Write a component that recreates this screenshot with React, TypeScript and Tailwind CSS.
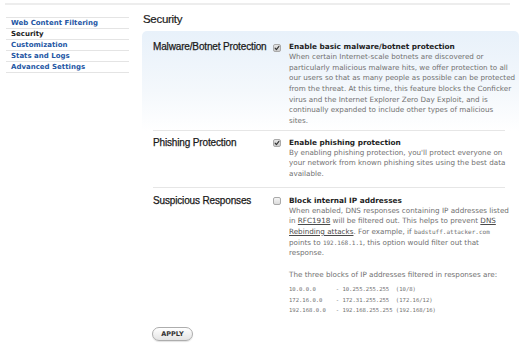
import React from "react";

const navItems = [
  { label: "Web Content Filtering", active: false },
  { label: "Security", active: true },
  { label: "Customization", active: false },
  { label: "Stats and Logs", active: false },
  { label: "Advanced Settings", active: false },
];

function Check({ checked }: { checked: boolean }) {
  return (
    <svg width="8" height="8" viewBox="0 0 8 8" className="block">
      <defs>
        <linearGradient id={checked ? "cbg1" : "cbg0"} x1="0" y1="0" x2="0" y2="1">
          <stop offset="0" stopColor={checked ? "#e8e8e8" : "#f6f6f6"} />
          <stop offset="1" stopColor={checked ? "#c8c8c8" : "#dadada"} />
        </linearGradient>
      </defs>
      <rect x="0.5" y="0.5" width="7" height="7" rx="1.5" fill={`url(#${checked ? "cbg1" : "cbg0"})`} stroke="#a9a9a9" strokeWidth="1" />
      {checked && <path d="M2.1 4.1 L3.4 5.6 L5.9 2.3" fill="none" stroke="#333" strokeWidth="1.1" strokeLinecap="round" strokeLinejoin="round" />}
    </svg>
  );
}

function Lines({ lines }: { lines: React.ReactNode[] }) {
  return (
    <div className="text-[7.2px] leading-[10.67px] text-[#707070]">
      {lines.map((l, i) => (
        <div key={i} className="whitespace-nowrap h-[10.67px]">
          {l}
        </div>
      ))}
    </div>
  );
}

function Section({
  label,
  checked,
  title,
  children,
  className,
}: {
  label: string;
  checked: boolean;
  title: string;
  children: React.ReactNode;
  className: string;
}) {
  return (
    <div className={`flex ${className}`}>
      <div className="w-[120px] shrink-0 font-['Liberation_Sans',Arial,sans-serif] text-[10px] leading-[10px] text-[#1a1a1a] tracking-[-0.15px] [-webkit-text-stroke:0.25px_#1a1a1a]">
        {label}
      </div>
      <div className="w-[16px] shrink-0 pt-[1.5px]">
        <Check checked={checked} />
      </div>
      <div className="flex-1 font-['DejaVu_Sans',Verdana,sans-serif]">
        <div className="text-[7.35px] leading-[10px] font-bold text-[#1e1e1e] whitespace-nowrap">{title}</div>
        {children}
      </div>
    </div>
  );
}

export default function App() {
  const mono = "font-['DejaVu_Sans_Mono','Liberation_Mono',monospace]";
  return (
    <div className="w-[522px] h-[346px] bg-white overflow-hidden">
      <div className="mt-[3px] ml-[5px] w-[505px] h-[2px] bg-[#ededed]" />
      <div className="flex">
        <nav className="ml-[6px] mt-[12px] w-[123px] self-start border-t border-[#e4e4e4] font-['DejaVu_Sans',Verdana,sans-serif] text-[7px] font-bold">
          {navItems.map((it) => (
            <div
              key={it.label}
              className={`h-[11px] border-b border-[#e4e4e4] pl-[5px] leading-[10px] whitespace-nowrap ${
                it.active ? "text-[#1a1a1a]" : "text-[#2456a4]"
              }`}
            >
              {it.label}
            </div>
          ))}
        </nav>
        <main className="ml-[13px] w-[377px]">
          <h1 className="mt-[7px] mb-[5px] pl-[1px] leading-[14px] text-[11.5px] font-['Liberation_Sans',Arial,sans-serif] text-[#222] tracking-[-0.3px] [-webkit-text-stroke:0.2px_#222]">
            Security
          </h1>
          <div className="rounded-t-[5px] bg-[linear-gradient(to_bottom,#e8f1fa_0px,#f4f8fc_60px,#ffffff_100px)] pl-[11px] pr-[14px]">
            <Section
              label="Malware/Botnet Protection"
              checked={true}
              title="Enable basic malware/botnet protection"
              className="pt-[11px] pb-[3px] border-b border-[#e6e6e6]"
            >
              <Lines
                lines={[
                  "When certain Internet-scale botnets are discovered or",
                  "particularly malicious malware hits, we offer protection to all",
                  "our users so that as many people as possible can be protected",
                  "from the threat. At this time, this feature blocks the Conficker",
                  "virus and the Internet Explorer Zero Day Exploit, and is",
                  "continually expanded to include other types of malicious",
                  "sites.",
                ]}
              />
            </Section>
            <Section
              label="Phishing Protection"
              checked={true}
              title="Enable phishing protection"
              className="pt-[7px] pb-[7px] border-b border-[#e6e6e6]"
            >
              <Lines
                lines={[
                  "By enabling phishing protection, you'll protect everyone on",
                  "your network from known phishing sites using the best data",
                  "available.",
                ]}
              />
            </Section>
            <Section
              label="Suspicious Responses"
              checked={false}
              title="Block internal IP addresses"
              className="pt-[8px]"
            >
              <Lines
                lines={[
                  "When enabled, DNS responses containing IP addresses listed",
                  <>
                    in <span className="underline text-[#4a4a4a]">RFC1918</span> will be filtered out. This helps to prevent{" "}
                    <span className="underline text-[#4a4a4a]">DNS</span>
                  </>,
                  <>
                    <span className="underline text-[#4a4a4a]">Rebinding attacks</span>. For example, if{" "}
                    <span className={`${mono} text-[6px]`}>badstuff.attacker.com</span>
                  </>,
                  <>
                    points to <span className={`${mono} text-[6px]`}>192.168.1.1</span>, this option would filter out that
                  </>,
                  "response.",
                  "",
                  "The three blocks of IP addresses filtered in responses are:",
                ]}
              />
              <pre className={`${mono} mt-[4px] text-[5.55px] leading-[10.5px] text-[#707070]`}>
{`10.0.0.0      - 10.255.255.255  (10/8)
172.16.0.0    - 172.31.255.255  (172.16/12)
192.168.0.0   - 192.168.255.255 (192.168/16)`}
              </pre>
            </Section>
          </div>
          <button className="mt-[11px] ml-[10px] w-[41px] h-[14px] rounded-full border border-[#adadad] bg-[linear-gradient(to_bottom,#ffffff,#e4e4e4)] shadow-[0_1px_1px_rgba(0,0,0,0.12)] font-['DejaVu_Sans',Verdana,sans-serif] text-[6.5px] font-bold text-[#333] leading-[12px]">
            APPLY
          </button>
        </main>
      </div>
    </div>
  );
}
